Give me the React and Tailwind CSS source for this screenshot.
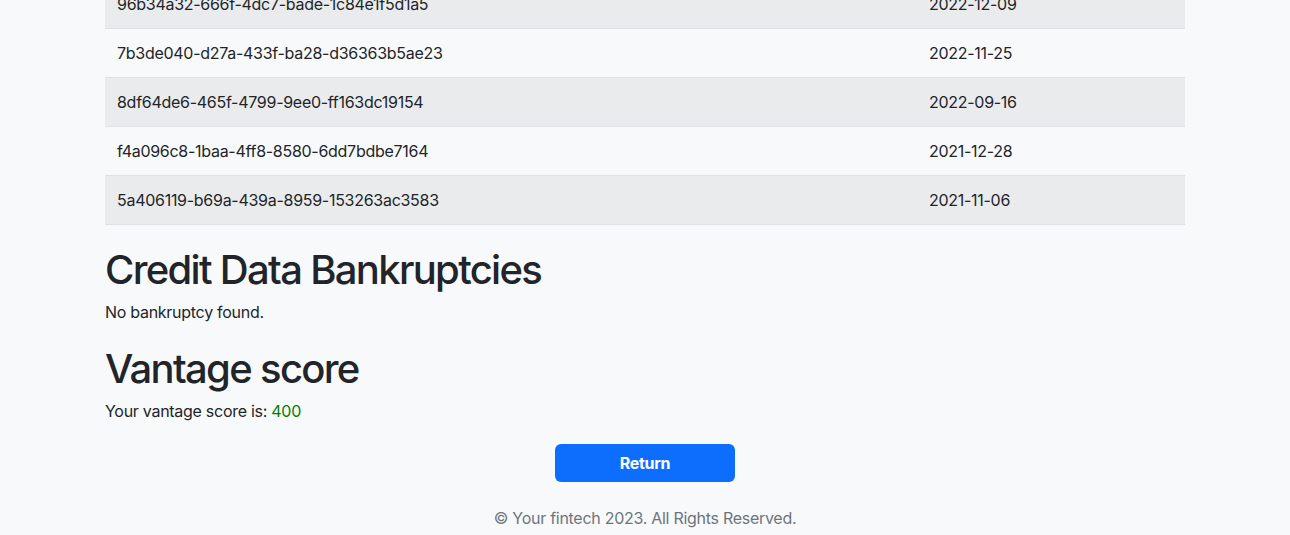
import React from 'react';

const rows = [
  ['96b34a32-666f-4dc7-bade-1c84e1f5d1a5', '2022-12-09'],
  ['7b3de040-d27a-433f-ba28-d36363b5ae23', '2022-11-25'],
  ['8df64de6-465f-4799-9ee0-ff163dc19154', '2022-09-16'],
  ['f4a096c8-1baa-4ff8-8580-6dd7bdbe7164', '2021-12-28'],
  ['5a406119-b69a-439a-8959-153263ac3583', '2021-11-06'],
];

export default function App() {
  return (
    <div
      className="min-h-screen bg-[#f8f9fa] text-[#212529] overflow-hidden tracking-[-0.28px]"
      style={{ fontFamily: 'Inter, "Noto Sans", sans-serif' }}
    >
      <div className="w-[1080px] mx-auto -mt-[20px]">
        <table className="w-full text-[16px] leading-6 border-collapse">
          <tbody>
            {rows.map((r, i) => (
              <tr
                key={r[0]}
                className={i % 2 === 0 ? 'bg-[#eaebed]' : 'bg-[#f8f9fa]'}
              >
                <td className="w-[812px] px-3 py-3 border-b border-[#dee2e6]">{r[0]}</td>
                <td className="px-3 py-3 border-b border-[#dee2e6]">{r[1]}</td>
              </tr>
            ))}
          </tbody>
        </table>

        <h1 className="mt-[21px] mb-[6px] text-[40px] leading-[48px] font-medium tracking-[-0.042em]">
          Credit Data Bankruptcies
        </h1>
        <p className="text-[16px] leading-6 mb-4">No bankruptcy found.</p>

        <h1 className="mt-[21px] mb-[6px] text-[40px] leading-[48px] font-medium tracking-[-0.042em]">
          Vantage score
        </h1>
        <p className="text-[16px] leading-6 mb-[21px]">
          Your vantage score is: <span className="text-[#008000]">400</span>
        </p>

        <div className="flex justify-center">
          <button className="w-[180px] h-[38px] rounded-md bg-[#0d6efd] text-white font-bold text-[16px]">
            Return
          </button>
        </div>

        <footer className="mt-6 text-center text-[16px] leading-6 text-[#6c757d]">
          © Your fintech 2023. All Rights Reserved.
        </footer>
      </div>
    </div>
  );
}
